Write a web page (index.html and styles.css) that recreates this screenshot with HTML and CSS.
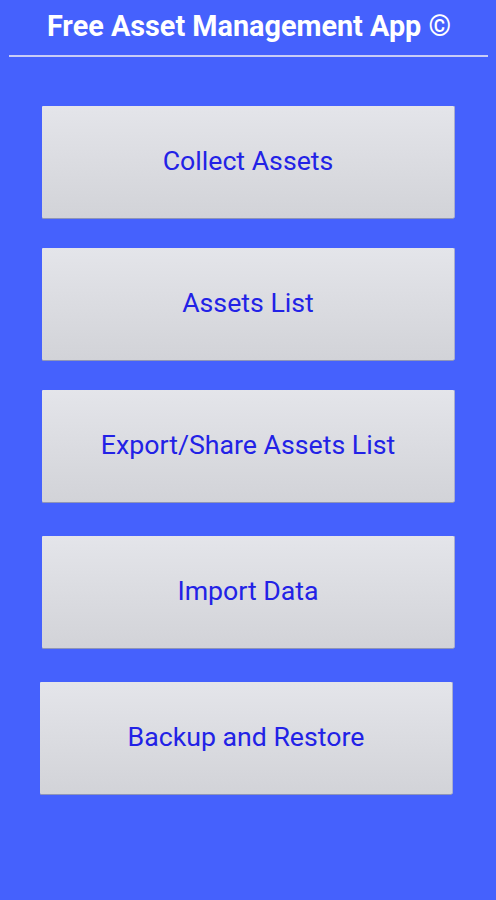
FILE: index.html
```html
<!DOCTYPE html>
<html>
<head>
<meta charset="utf-8">
<link rel="stylesheet" href="styles.css">
</head>
<body>
<header class="header">
  <h1 class="title">Free Asset Management App ©</h1>
  <div class="rule"></div>
</header>
<main class="menu">
  <button class="btn">Collect Assets</button>
  <button class="btn">Assets List</button>
  <button class="btn">Export/Share Assets List</button>
  <button class="btn btn-wide-gap">Import Data</button>
  <button class="btn btn-wide-gap btn-shift">Backup and Restore</button>
</main>
</body>
</html>
```
FILE: styles.css
```css
html, body {
  margin: 0;
  padding: 0;
  background: #4561fd;
  height: 100%;
}
body {
  font-family: Roboto, "Liberation Sans", sans-serif;
}
.header {
  padding: 8px 8px 0 9px;
}
.title {
  margin: 0;
  height: 37px;
  line-height: 37px;
  text-align: center;
  color: #ffffff;
  font-size: 28.8px;
  font-weight: 700;
  padding-left: 1px;
}
.rule {
  margin-top: 10px;
  height: 2px;
  background: #c9cdf6;
}
.menu {
  display: flex;
  flex-direction: column;
  align-items: flex-start;
  padding: 49px 0 0 42px;
}
.btn {
  width: 412px;
  height: 112px;
  margin-bottom: 30px;
  border: none;
  border-radius: 1px;
  background: linear-gradient(#e4e5ea, #dadbe0 55%, #d2d3d8);
  box-shadow: 0 1px 0 #8e95b8, 1px 0 0 #a9aed0;
  color: #2222e6;
  font-family: Roboto, "Liberation Sans", sans-serif;
  font-size: 26.7px;
  padding: 0;
  padding-bottom: 2px;
}
.btn-wide-gap {
  margin-top: 4px;
}
.btn-shift {
  margin-left: -2px;
}
```
